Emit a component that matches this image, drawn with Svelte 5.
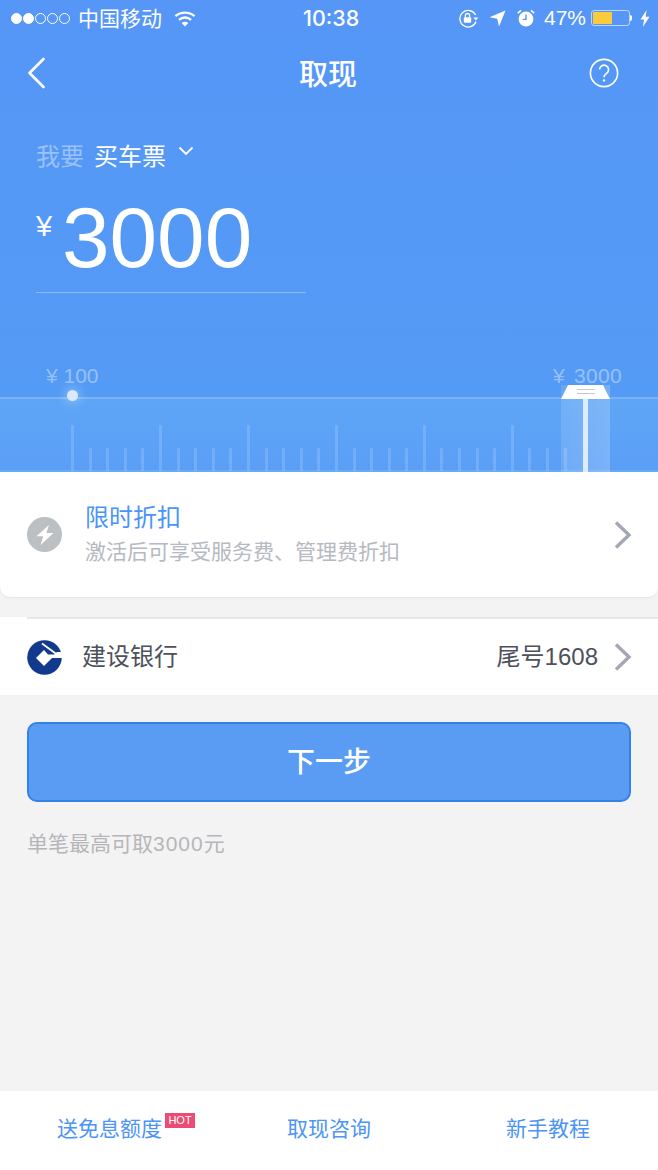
<script>
  const ticks = Array.from({ length: 29 }, (_, i) => i % 5 === 0);
  const dots = [true, true, false, false, false];
</script>

<div class="page">
  <section class="hero">
    <div class="status">
      <div class="status-left">
        <div class="dots">
          {#each dots as on}<span class="dot" class:on></span>{/each}
        </div>
        <span class="carrier">中国移动</span>
        <svg class="wifi" width="22" height="17" viewBox="0 0 22 17" fill="none" stroke="#fff" stroke-width="2.4">
          <path d="M1.5 6.2C6.8 1.4 15.2 1.4 20.5 6.2" />
          <path d="M5 9.8C8.4 6.8 13.6 6.8 17 9.8" />
          <path d="M11 16.4 7.7 12.9C9.6 11.4 12.4 11.4 14.3 12.9Z" fill="#fff" stroke="none" />
        </svg>
      </div>
      <span class="time">10:38</span>
      <div class="status-right">
        <svg width="21" height="19" viewBox="0 0 21 19" fill="none">
          <path d="M18 12.5A8.3 8.3 0 1 1 17.6 6" stroke="#fff" stroke-width="1.3" />
          <path d="M15.4 8.4h5l-2.5 3z" fill="#fff" />
          <rect x="5.8" y="8.2" width="7.4" height="5.6" rx="1" fill="#fff" />
          <path d="M7.4 8.4V6.6a2.1 2.1 0 0 1 4.2 0v1.8" stroke="#fff" stroke-width="1.3" />
        </svg>
        <svg class="loc" width="17" height="17" viewBox="0 0 17 17"><path d="M16.5.5 10 16.5 8.2 8.8.5 7.2Z" fill="#fff" /></svg>
        <svg class="alarm" width="18" height="18" viewBox="0 0 18 18" fill="none">
          <circle cx="9" cy="10" r="7.4" fill="#fff" />
          <path d="M9 5.5V10.4H5.8" stroke="#5596f6" stroke-width="1.4" />
          <path d="M.8 4.2 4 1.4M17.2 4.2 14 1.4" stroke="#fff" stroke-width="1.6" />
        </svg>
        <span class="pct">47%</span>
        <div class="battery"><div class="level"></div></div>
        <span class="nub"></span>
        <svg class="bolt" width="10" height="17" viewBox="0 0 10 17"><path d="M6.6 0 .5 9.6h3.6L2.9 17 9.5 6.8H5.6Z" fill="#fff" /></svg>
      </div>
    </div>

    <header class="nav">
      <svg width="20" height="32" viewBox="0 0 20 32" fill="none" stroke="#fff" stroke-width="2.6" stroke-linecap="round" stroke-linejoin="round">
        <path d="M16.5 2 2.5 16l14 14" />
      </svg>
      <h1>取现</h1>
      <svg class="help" width="30" height="30" viewBox="0 0 30 30" fill="none">
        <circle cx="15" cy="15" r="13.6" stroke="#fff" stroke-width="1.6" />
        <path d="M10.6 11.6a4.5 4.5 0 1 1 7 3.8c-1.7 1.2-2.6 1.9-2.6 3.8" stroke="#fff" stroke-width="1.6" />
        <circle cx="15" cy="22.4" r="1.2" fill="#fff" />
      </svg>
    </header>

    <div class="purpose">
      <span class="muted">我要</span>
      <span>买车票</span>
      <svg width="16" height="10" viewBox="0 0 16 10" fill="none" stroke="#fff" stroke-width="1.8"><path d="M1.5 1.5 8 8l6.5-6.5" /></svg>
    </div>

    <div class="amount">
      <span class="yen">¥</span>
      <span class="num">3000</span>
    </div>

    <div class="limits">
      <span>¥ 100</span>
      <span class="max">¥ 3000</span>
    </div>

    <div class="ruler">
      <span class="knob"></span>
      <div class="ticks">
        {#each ticks as major}<span class="tick" class:major></span>{/each}
      </div>
      <div class="thumb">
        <div class="cap"><i></i><i></i></div>
        <div class="stem"></div>
      </div>
    </div>
  </section>

  <section class="card">
    <div class="badge">
      <svg width="20" height="22" viewBox="0 0 20 22"><path d="M14 1 1.5 12.2h6.8L5.5 21 18.5 9h-7.2Z" fill="#fff" /></svg>
    </div>
    <div class="card-text">
      <div class="card-title">限时折扣</div>
      <div class="card-sub">激活后可享受服务费、管理费折扣</div>
    </div>
    <svg class="chev" width="18" height="28" viewBox="0 0 18 28" fill="none" stroke="#a4a8b4" stroke-width="3.4"><path d="M2 1.5 15 14 2 26.5" /></svg>
  </section>

  <section class="bank">
    <div class="bank-inner">
      <svg class="logo" width="35" height="36" viewBox="0 0 35 36">
        <circle cx="17.5" cy="18.5" r="17.3" fill="#123a8c" />
        <path d="M20 -2 37 11V-2Z" fill="#fff" />
        <path d="M15 4.5 30 15.5" stroke="#fff" stroke-width="1.8" />
        <path d="M17 11 9 19l8 8 8-8h11v-6h-6l-3 2.5H21Z" fill="#fff" />
      </svg>
      <span class="bank-name">建设银行</span>
      <span class="tail">尾号1608</span>
      <svg class="chev" width="18" height="28" viewBox="0 0 18 28" fill="none" stroke="#a4a8b4" stroke-width="3.4"><path d="M2 1.5 15 14 2 26.5" /></svg>
    </div>
  </section>

  <main class="body">
    <button>下一步</button>
    <p class="hint">单笔最高可取<span>3000</span>元</p>
  </main>

  <footer>
    <a class="f1">送免息额度<em>HOT</em></a>
    <a>取现咨询</a>
    <a class="f3">新手教程</a>
  </footer>
</div>

<style>
  :global(body) { margin: 0; background: #f3f3f3; }
  .page {
    width: 658px; height: 1170px; display: flex; flex-direction: column; overflow: hidden;
    font-family: "Liberation Sans", "Noto Sans CJK SC", sans-serif; background: #f3f3f3;
  }
  .hero {
    height: 472px; flex: none; display: flex; flex-direction: column; color: #fff;
    background: linear-gradient(#5596f6, #549cf5);
  }
  .status { height: 36px; display: flex; align-items: center; padding: 0 8px 0 11px; position: relative; font-size: 21px; }
  .status-left { display: flex; align-items: center; flex: 1; }
  .dots { display: flex; gap: 1px; margin-right: 8px; }
  .dot { width: 11px; height: 11px; border: 1px solid #fff; border-radius: 50%; box-sizing: border-box; }
  .dot.on { background: #fff; }
  .carrier { margin-right: 12px; font-family: "Noto Sans CJK SC", sans-serif; line-height: 1; margin-top: -1px; }
  .time { position: absolute; left: 303px; font: 500 21.5px Inter, sans-serif; }
  .status-right { display: flex; align-items: center; }
  .loc { margin-left: 10px; }
  .alarm { margin-left: 11px; }
  .pct { margin-left: 9px; margin-right: 5px; }
  .battery { width: 39px; height: 16px; border: 1px solid rgba(255,255,255,.6); border-radius: 3px; box-sizing: border-box; padding: 1px; }
  .level { width: 19px; height: 100%; background: #fccb3d; }
  .nub { width: 2px; height: 6px; background: #fff; border-radius: 0 2px 2px 0; margin-right: 8px; }
  .nav { height: 74px; display: grid; grid-template-columns: 1fr auto 1fr; align-items: center; padding: 0 39px 2px 27px; }
  .nav h1 { margin: 0 0 2px; font-size: 29px; font-weight: 500; font-family: "Noto Sans CJK SC", sans-serif; line-height: 1; position: relative; left: 5px; }
  .help { justify-self: end; }
  .purpose { display: flex; align-items: center; gap: 10px; margin: 20px 0 0 36px; font-size: 24px; height: 44px; font-family: "Noto Sans CJK SC", sans-serif; }
  .purpose svg { margin: -6px 0 0 2px; }
  .muted { color: rgba(255,255,255,.42); }
  .amount { display: flex; align-items: flex-start; width: 270px; box-sizing: border-box; margin: 4px 0 0 36px; height: 113px; border-bottom: 1px solid rgba(255,255,255,.32); padding-top: 16px; }
  .yen { font-size: 29px; line-height: 1; width: 26px; margin: 16px 0 0 0; }
  .num { font-size: 85.5px; line-height: 1; margin-top: -1px; }
  .limits { margin-top: 71px; display: flex; justify-content: space-between; padding: 0 37px 0 46px; font-size: 21px; color: rgba(255,255,255,.4); height: 24px; line-height: 24px; }
  .max { word-spacing: 3px; letter-spacing: .3px; margin-right: -1px; }
  .ruler {
    flex: 1; position: relative; margin-top: 9px; border-top: 2px solid rgba(255,255,255,.2);
    border-bottom: 2px solid rgba(255,255,255,.06);
    background: linear-gradient(#5ea5f6, #5a9ff6);
  }
  .ticks { position: absolute; left: 71px; bottom: -1px; display: flex; align-items: flex-end; gap: 14.6px; }
  .tick { width: 3px; height: 23px; background: rgba(255,255,255,.15); }
  .tick.major { height: 46px; }
  .knob { position: absolute; left: 67px; top: -9px; width: 11px; height: 11px; border-radius: 50%; background: #dbe9fc; box-shadow: 0 0 8px 3px rgba(255,255,255,.25); }
  .thumb { position: absolute; left: 561px; top: -14px; bottom: -2px; width: 49px; display: flex; flex-direction: column; background: linear-gradient(90deg, rgba(255,255,255,.12), rgba(255,255,255,.2)); }
  .cap { background: #fff; clip-path: polygon(7px 0, 42px 0, 49px 100%, 0 100%); display: flex; flex-direction: column; align-items: center; gap: 3px; padding-top: 4px; flex: none; box-sizing: border-box; height: 14px; }
  .cap i { width: 18px; height: 1px; background: #c6c9d0; flex: none; }
  .stem { width: 5px; flex: 1; margin-left: 22px; background: #dcebfd; }
  .card {
    height: 125px; flex: none; background: #fff; border-radius: 0 0 10px 10px; display: flex; align-items: center;
    padding: 0 26px 0 27px; box-sizing: border-box; box-shadow: 0 1px 2px rgba(0,0,0,.06); position: relative;
  }
  .badge { width: 35px; height: 35px; border-radius: 50%; background: #bcc0c3; display: flex; align-items: center; justify-content: center; }
  .card-text { flex: 1; margin-left: 23px; margin-top: -2px; }
  .card-title { font-size: 24px; line-height: 36px; color: #4a94f7; }
  .card-sub { font-size: 21px; line-height: 32px; color: #b6b9c1; }
  .bank { height: 78px; flex: none; margin-top: 20px; background: #fff; }
  .bank-inner { height: 100%; box-sizing: border-box; margin-left: 27px; padding-right: 26px; border-top: 2px solid #e6e6eb; display: flex; align-items: center; }
  .bank-name { flex: 1; margin: -5px 0 0 20px; font-size: 24px; color: #4c515c; }
  .tail { font-size: 24px; color: #4c515c; margin: -5px 16px 0 0; }
  .body { flex: 1; padding: 27px 27px 0; }
  button {
    display: block; width: 604px; height: 80px; border-radius: 10px; border: 2px solid #3382ea; background: #5a9bf4;
    color: #fff; font: 500 28px "Noto Sans CJK SC", sans-serif; padding: 0 0 5px; box-sizing: border-box;
  }
  .hint { margin: 27px 0 0; font-size: 21px; line-height: 30px; color: #b6b6ba; }
  .hint span { letter-spacing: 1px; }
  footer { height: 79px; flex: none; background: #fff; display: flex; justify-content: center; align-items: center; font-size: 21px; color: #4c94f5; position: relative; padding-bottom: 5px; box-sizing: border-box; }
  footer a { position: relative; top: -1px; }
  .f1 { position: absolute; left: 57px; top: 21px; }
  .f3 { position: absolute; right: 68px; top: 21px; }
  footer em { position: absolute; left: 108px; top: 1px; width: 30px; height: 15px; background: #ec4c74; color: #fff; font: normal 11px/15px "Liberation Sans", sans-serif; text-align: center; }
</style>
